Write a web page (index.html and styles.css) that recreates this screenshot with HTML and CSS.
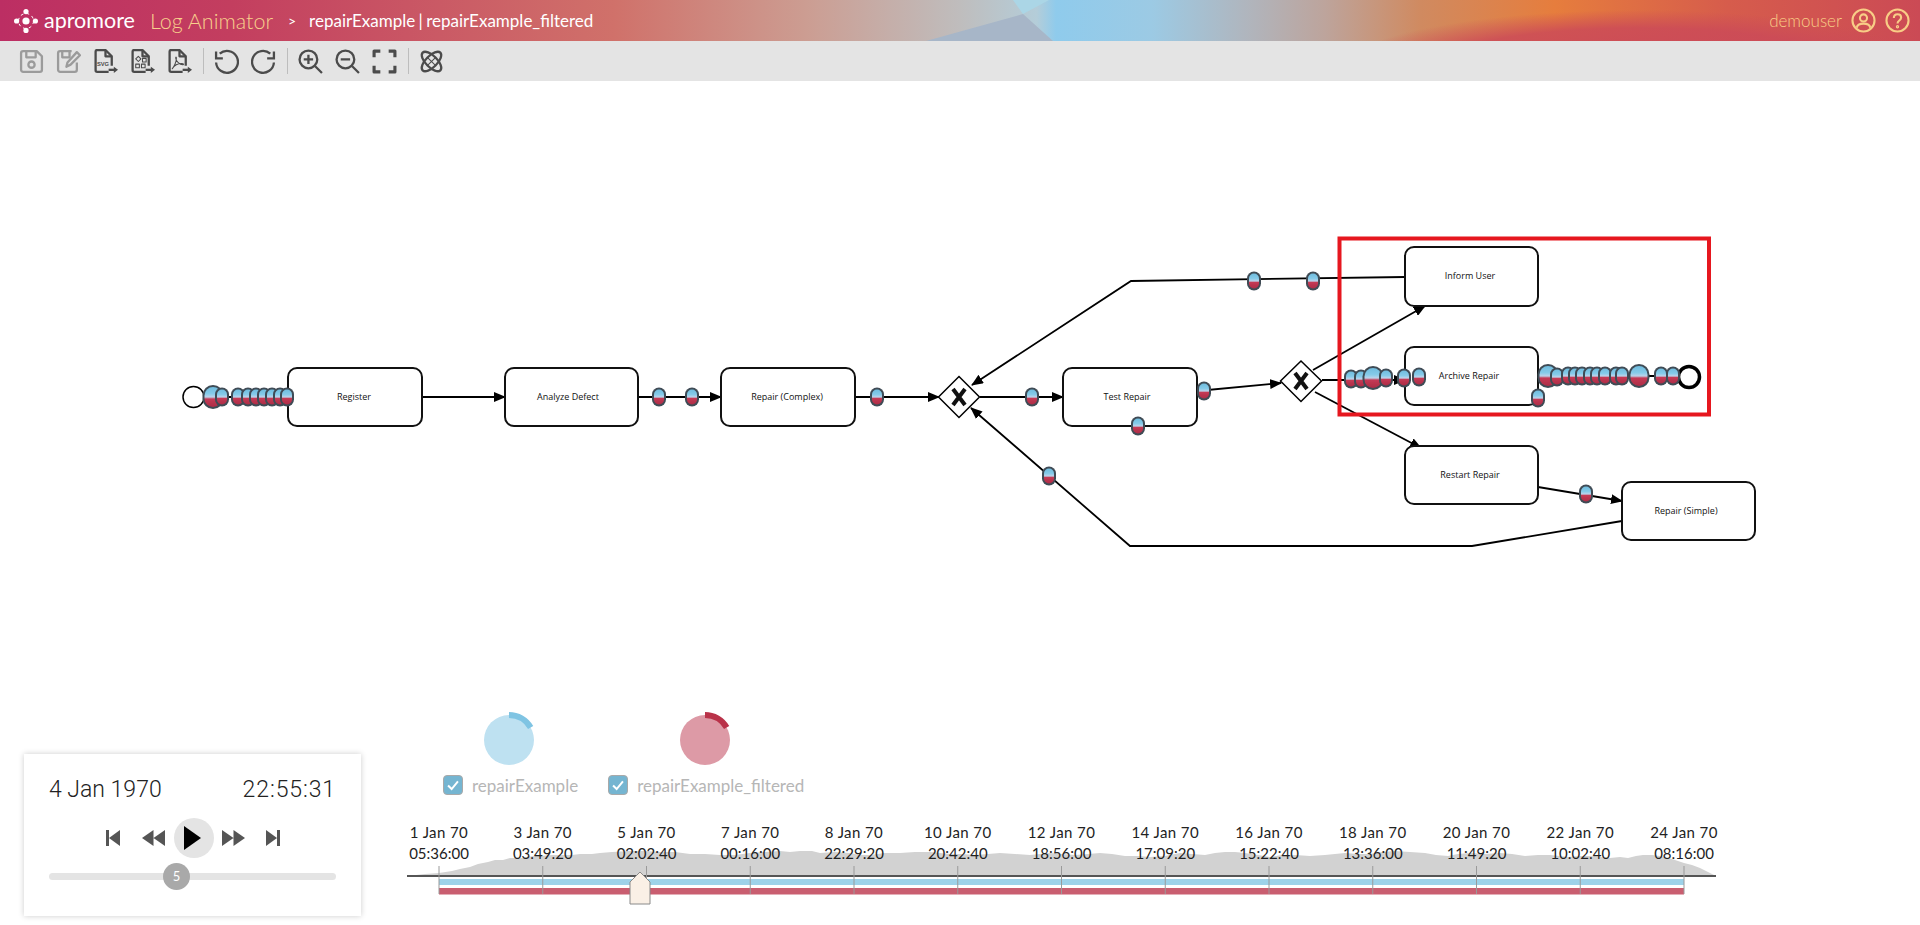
FILE: index.html
```html
<!DOCTYPE html>
<html lang="en">

<head>
  <meta charset="UTF-8">
  <title>Log Animator</title>
  <link rel="stylesheet" href="styles.css">
</head>

<body class="app-body">

  <!-- Header -->
  <header class="app-header">
    <svg class="header-art" viewBox="0 0 1920 41" preserveAspectRatio="none" aria-hidden="true">
      <defs>
        <linearGradient id="hdr-base">
          <stop offset="0" stop-color="#bc2e63" />
          <stop offset="0.12" stop-color="#c33e5f" />
          <stop offset="0.32" stop-color="#d0716a" />
          <stop offset="0.42" stop-color="#cc9d92" />
          <stop offset="0.5" stop-color="#bfbdbd" />
          <stop offset="0.54" stop-color="#b4cdd9" />
          <stop offset="0.55" stop-color="#8fcbec" />
          <stop offset="0.6" stop-color="#9ccae4" />
          <stop offset="0.65" stop-color="#b0b5bd" />
          <stop offset="0.69" stop-color="#bda49c" />
          <stop offset="0.74" stop-color="#d08a60" />
          <stop offset="0.81" stop-color="#e67d3d" />
          <stop offset="0.9" stop-color="#d65c4c" />
          <stop offset="1" stop-color="#cb4a55" />
        </linearGradient>
        <radialGradient id="hdr-red" gradientUnits="userSpaceOnUse" cx="1640" cy="70" r="300" gradientTransform="matrix(1 0 0 0.2 0 56)">
          <stop offset="0" stop-color="#cb4a58" />
          <stop offset="0.7" stop-color="#cb4a58" stop-opacity="0.85" />
          <stop offset="1" stop-color="#cb4a58" stop-opacity="0" />
        </radialGradient>
      </defs>
      <rect width="1920" height="41" fill="url(#hdr-base)" />
      <rect x="1300" width="620" height="41" fill="url(#hdr-red)" />
      <polygon points="1013,0 1049,0 1023,14" fill="#abd6e6" />
      <polygon points="926,41 1023,14 1053,41" fill="#a7b6c8" />
    </svg>
    <div class="brand">
      <svg class="brand-icon" viewBox="0 0 24 24">
        <circle cx="12" cy="12" r="7.5" fill="none" stroke="#fff" stroke-width="1" stroke-dasharray="3 2.9" />
        <circle cx="12" cy="12" r="3.6" fill="#fff" />
        <circle cx="12" cy="2.6" r="2.6" fill="#fff" />
        <circle cx="12" cy="21.4" r="2.6" fill="#fff" />
        <circle cx="2.6" cy="12" r="2.6" fill="#fff" />
        <circle cx="21.4" cy="12" r="2.6" fill="#fff" />
      </svg>
      <span class="brand-name">apromore</span>
      <span class="brand-tool">Log Animator</span>
      <span class="crumb-sep">&gt;</span>
      <span class="crumb">repairExample | repairExample_filtered</span>
    </div>
    <div class="user-box">
      <span class="user-name">demouser</span>
      <svg class="user-icon" viewBox="0 0 24 24">
        <circle cx="12" cy="12" r="10.6" />
        <circle cx="12" cy="9.5" r="3.4" />
        <path d="M5.5 19c.5-3 3-4 6.500-4s6 1 6.500 4" />
      </svg>
      <svg class="user-icon" viewBox="0 0 24 24">
        <circle cx="12" cy="12" r="10.6" />
        <path d="M8.500 9.500c0-2.200 1.500-3.500 3.500-3.500s3.500 1.300 3.500 3.200c0 2.800-3.500 2.800-3.500 5.600" />
        <circle cx="12" cy="18" r="0.6" />
      </svg>
    </div>
  </header>

  <!-- Toolbar -->
  <nav class="toolbar">
    <svg class="tool tool-off" viewBox="0 0 24 24">
      <path d="M4 2h13l5 5v13a2 2 0 0 1-2 2H4a2 2 0 0 1-2-2V4a2 2 0 0 1 2-2z" />
      <path d="M7 2v6h9V2" />
      <circle cx="12" cy="15" r="3" />
    </svg>
    <svg class="tool tool-off" viewBox="0 0 24 24">
      <path d="M20 13v7a2 2 0 0 1-2 2H4a2 2 0 0 1-2-2V4a2 2 0 0 1 2-2h11" />
      <path d="M6 2v6h7V2" />
      <path d="M10 17l1-4 9-10 3 3-9 9z" fill="#e4e4e4" />
    </svg>
    <svg class="tool" viewBox="0 0 24 24">
      <path d="M15 22H4a1.500 1.500 0 0 1-1.500-1.500v-18A1.500 1.500 0 0 1 4 1h8l6 6v9" />
      <path d="M12 1v6h6" />
      <text class="tool-text" x="3.800" y="16">SVG</text>
      <path d="M15 20h7" />
      <path class="tool-fill" d="M20 17l4 3-4 3z" />
    </svg>
    <svg class="tool" viewBox="0 0 24 24">
      <path d="M15 22H4a1.500 1.500 0 0 1-1.500-1.500v-18A1.500 1.500 0 0 1 4 1h8l6 6v9" />
      <path d="M12 1v6h6" />
      <path class="tool-thin" d="M8 7l2.500 2.500L8 12 5.500 9.500zM12 9h3.500v3.500H12zM5.500 14.500H9V18H5.500zM11 14.500h3.500V18H11z" />
      <path d="M15 20h7" />
      <path class="tool-fill" d="M20 17l4 3-4 3z" />
    </svg>
    <svg class="tool" viewBox="0 0 24 24">
      <path d="M15 22H4a1.500 1.500 0 0 1-1.500-1.500v-18A1.500 1.500 0 0 1 4 1h8l6 6v9" />
      <path d="M12 1v6h6" />
      <path class="tool-thin" d="M5 19c2-2 4-7 4-10 0-2-1-1.500-.5.500S12 15 15 15c1.500 0 1-1-1-1-3 0-7 2-9 5z" />
      <path d="M15 20h7" />
      <path class="tool-fill" d="M20 17l4 3-4 3z" />
    </svg>
    <span class="tool-sep"></span>
    <svg class="tool" viewBox="0 0 24 24">
      <path d="M5.500 4.500A10.500 10.500 0 1 1 2 13" />
      <path d="M2 2.500V9h6.500" stroke-linejoin="miter" />
    </svg>
    <svg class="tool" viewBox="0 0 24 24">
      <path d="M18.500 4.500A10.500 10.500 0 1 0 22 13" />
      <path d="M22 2.500V9h-6.500" stroke-linejoin="miter" />
    </svg>
    <span class="tool-sep"></span>
    <svg class="tool" viewBox="0 0 24 24">
      <circle cx="10" cy="10" r="8.500" />
      <path d="M16.500 16.500L23 23M10 5.500v9M5.500 10h9" />
    </svg>
    <svg class="tool" viewBox="0 0 24 24">
      <circle cx="10" cy="10" r="8.500" />
      <path d="M16.500 16.500L23 23M5.500 10h9" />
    </svg>
    <svg class="tool tool-fit" viewBox="0 0 24 24">
      <path d="M2 8V2h6M16 2h6v6M22 16v6h-6M8 22H2v-6" />
    </svg>
    <span class="tool-sep"></span>
    <svg class="tool" viewBox="0 0 24 24">
      <ellipse cx="12" cy="12" rx="5.500" ry="12" transform="rotate(45 12 12)" />
      <ellipse cx="12" cy="12" rx="5.500" ry="12" transform="rotate(-45 12 12)" />
      <path class="tool-thin" d="M8 8l8 8M16 8l-8 8" />
    </svg>
  </nav>

  <!-- Process map, in page coordinates -->
  <main class="map-area">
    <svg class="map" viewBox="0 81 1920 619">
      <defs>
        <marker id="arrow" markerUnits="userSpaceOnUse" markerWidth="12" markerHeight="10" refX="11" refY="5" orient="auto">
          <path d="M0 0L12 5L0 10z" fill="#000" />
        </marker>
        <linearGradient id="tok-fill" x2="0" y2="1">
          <stop offset="0" stop-color="#6fbcde" />
          <stop offset="0.34" stop-color="#86cbe9" />
          <stop offset="0.5" stop-color="#bcd3ea" />
          <stop offset="0.6" stop-color="#c43a55" />
          <stop offset="1" stop-color="#ad2c46" />
        </linearGradient>
        <filter id="tok-soft" x="-30%" y="-30%" width="160%" height="160%">
          <feGaussianBlur stdDeviation="0.7" />
        </filter>
        <g id="tok" filter="url(#tok-soft)">
          <rect x="-7" y="-9.500" width="14" height="19" rx="7" fill="#3f4b55" />
          <rect x="-5" y="-7.500" width="10" height="15" rx="5" fill="url(#tok-fill)" />
        </g>
        <g id="tok-big" filter="url(#tok-soft)">
          <rect x="-10.500" y="-12" width="21" height="24" rx="10.500" fill="#3f4b55" />
          <rect x="-8.500" y="-10" width="17" height="20" rx="8.500" fill="url(#tok-fill)" />
        </g>
      </defs>

      <!-- Edges -->
      <g class="edges">
        <path d="M204 397H288" />
        <path d="M422 397H505" marker-end="url(#arrow)" />
        <path d="M638 397H721" marker-end="url(#arrow)" />
        <path d="M855 397H939" marker-end="url(#arrow)" />
        <path d="M980 397H1063" marker-end="url(#arrow)" />
        <path d="M1197 391L1281 383" marker-end="url(#arrow)" />
        <path d="M1313 370L1425 306" marker-end="url(#arrow)" />
        <path d="M1322 380H1405" marker-end="url(#arrow)" />
        <path d="M1315 392L1421 448" marker-end="url(#arrow)" />
        <path d="M1538 376H1678" />
        <path d="M1538 487L1622 501" marker-end="url(#arrow)" />
        <path d="M1622 521L1472 546H1130L971 408" marker-end="url(#arrow)" />
        <path d="M1405 277L1131 281L972 385" marker-end="url(#arrow)" />
      </g>

      <!-- Nodes -->
      <circle class="node-start" cx="193.500" cy="397" r="10.500" />
      <g class="nodes">
        <rect x="288" y="368" width="134" height="58" rx="9" />
        <rect x="505" y="368" width="133" height="58" rx="9" />
        <rect x="721" y="368" width="134" height="58" rx="9" />
        <rect x="1063" y="368" width="134" height="58" rx="9" />
        <rect x="1405" y="247" width="133" height="59" rx="9" />
        <rect x="1405" y="347" width="133" height="58" rx="9" />
        <rect x="1405" y="446" width="133" height="58" rx="9" />
        <rect x="1622" y="482" width="133" height="58" rx="9" />
      </g>
      <g class="gateways">
        <path d="M959 376.500L979.500 397L959 417.500L938.500 397z" />
        <path d="M1301 361L1321.500 381L1301 401.500L1280.500 381z" />
      </g>
      <g class="gate-x">
        <path d="M953 389L965 405M965 389L953 405" />
        <path d="M1295 373L1307 389M1307 373L1295 389" />
      </g>
      <circle class="node-end" cx="1689" cy="377" r="10.500" />
      <g class="node-labels">
        <text x="354" y="400">Register</text>
        <text x="568" y="400">Analyze Defect</text>
        <text x="787" y="400">Repair (Complex)</text>
        <text x="1127" y="400">Test Repair</text>
        <text x="1470" y="279">Inform User</text>
        <text x="1469" y="379">Archive Repair</text>
        <text x="1470" y="478">Restart Repair</text>
        <text x="1686" y="514">Repair (Simple)</text>
      </g>

      <!-- Tokens -->
      <use href="#tok-big" x="213" y="397" />
      <use href="#tok" x="222" y="397" />
      <use href="#tok" x="238" y="397" />
      <use href="#tok" x="248" y="397" />
      <use href="#tok" x="256" y="397" />
      <use href="#tok" x="264" y="397" />
      <use href="#tok" x="272" y="397" />
      <use href="#tok" x="280" y="397" />
      <use href="#tok" x="287" y="397" />
      <use href="#tok" x="659" y="397" />
      <use href="#tok" x="692" y="397" />
      <use href="#tok" x="877" y="397" />
      <use href="#tok" x="1032" y="397" />
      <use href="#tok" x="1138" y="426" />
      <use href="#tok" x="1204" y="391" />
      <use href="#tok" x="1049" y="476" />
      <use href="#tok" x="1254" y="281" />
      <use href="#tok" x="1313" y="281" />
      <use href="#tok" x="1586" y="494" />
      <use href="#tok" x="1351" y="379" />
      <use href="#tok" x="1361" y="379" />
      <use href="#tok-big" x="1373" y="378" />
      <use href="#tok" x="1386" y="378" />
      <use href="#tok" x="1404" y="378" />
      <use href="#tok" x="1419" y="377" />
      <use href="#tok" x="1538" y="398" />
      <use href="#tok-big" x="1548" y="376" />
      <use href="#tok" x="1557" y="377" />
      <use href="#tok" x="1568" y="376" />
      <use href="#tok" x="1575" y="376" />
      <use href="#tok" x="1582" y="376" />
      <use href="#tok" x="1590" y="376" />
      <use href="#tok" x="1597" y="376" />
      <use href="#tok" x="1605" y="376" />
      <use href="#tok" x="1616" y="376" />
      <use href="#tok" x="1622" y="376" />
      <use href="#tok-big" x="1639" y="376" />
      <use href="#tok" x="1661" y="376" />
      <use href="#tok" x="1673" y="376" />

      <rect class="highlight" x="1339.500" y="238.500" width="369.500" height="176" />
    </svg>
  </main>

  <!-- Player and timeline -->
  <section class="bottom-row">
    <div class="player-card">
      <div class="player-clock">
        <span>4 Jan 1970</span>
        <span class="player-time">22:55:31</span>
      </div>
      <div class="player-controls">
        <svg class="ctl ctl-skip" viewBox="0 0 14 16">
          <path d="M0 0h3v16H0zM14 0v16L3 8z" />
        </svg>
        <svg class="ctl ctl-seek" viewBox="0 0 23 16">
          <path d="M11.500 0v16L0 8zM23 0v16L11.500 8z" />
        </svg>
        <span class="ctl-play">
          <svg class="ctl-play-icon" viewBox="0 0 17 24">
            <path d="M0 0l17 12L0 24z" />
          </svg>
        </span>
        <svg class="ctl ctl-seek" viewBox="0 0 23 16">
          <path d="M0 0l11.500 8L0 16zM11.500 0L23 8l-11.500 8z" />
        </svg>
        <svg class="ctl ctl-skip" viewBox="0 0 14 16">
          <path d="M0 0l11 8-11 8zM11 0h3v16h-3z" />
        </svg>
      </div>
      <div class="speed-track">
        <span class="speed-thumb">5</span>
      </div>
    </div>

    <div class="timeline-col">
      <div class="legend">
        <div class="legend-item">
          <svg class="legend-ring" viewBox="0 0 60 60">
            <circle cx="30" cy="30" r="25" fill="#bee1f1" />
            <path d="M30 5A25 25 0 0 1 51.650 17.500" fill="none" stroke="#7fc4e3" stroke-width="6" />
          </svg>
          <label class="legend-label">
            <span class="legend-check">
              <svg viewBox="0 0 20 20"><path d="M4.500 10.500L8.500 14.500L15.500 6" /></svg>
            </span>
            repairExample
          </label>
        </div>
        <div class="legend-item">
          <svg class="legend-ring" viewBox="0 0 60 60">
            <circle cx="30" cy="30" r="25" fill="#dd9aa6" />
            <path d="M30 5A25 25 0 0 1 51.650 17.500" fill="none" stroke="#b93249" stroke-width="6" />
          </svg>
          <label class="legend-label">
            <span class="legend-check">
              <svg viewBox="0 0 20 20"><path d="M4.500 10.500L8.500 14.500L15.500 6" /></svg>
            </span>
            repairExample_filtered
          </label>
        </div>
      </div>

      <svg class="timeline" viewBox="407 815 1330 95">
        <path class="tl-area" d="M407 876L425 874L439 873L452 871L460 869L470 867L478 864L488 862L495 860L503 860L510 858L522 858L533 856L540 856L552 855L560 855L572 855L580 854L592 854L600 853L612 852L630 851L645 851L660 852L675 852L690 854L705 854L720 855L735 855L750 853L765 852L780 851L790 852L800 851L812 851L820 853L835 852L850 853L860 855L870 855L885 853L900 853L915 852L930 852L940 853L950 854L962 854L975 855L988 854L1000 853L1015 854L1030 855L1040 854L1050 853L1062 854L1075 855L1088 854L1100 853L1112 854L1125 856L1138 856L1150 857L1165 856L1180 853L1192 854L1205 855L1215 853L1225 852L1235 852L1245 853L1258 855L1270 857L1282 855L1295 855L1310 856L1325 855L1335 854L1345 853L1358 854L1370 854L1382 852L1395 851L1410 852L1425 853L1436 855L1448 856L1458 854L1470 853L1485 854L1500 853L1512 854L1525 856L1538 855L1550 855L1560 856L1568 857L1580 856L1590 856L1600 857L1610 858L1620 857L1628 858L1636 856L1643 855L1652 855L1660 856L1672 859L1684 863L1692 865L1700 868L1708 872L1716 876z" />
        <rect class="tl-blue" x="439" y="879" width="1245" height="6" />
        <rect class="tl-red" x="439" y="888" width="1245" height="6.500" />
        <path class="tl-axis" d="M407 876H1716" />
        <path class="tl-ticks" d="M439 866V894M542.750 866V894M646.500 866V894M750.250 866V894M854 866V894M957.750 866V894M1061.500 866V894M1165.250 866V894M1269 866V894M1372.750 866V894M1476.500 866V894M1580.250 866V894M1684 866V894" />
        <polygon class="tl-marker" points="640,872 650,882 650,904 630,904 630,882" />
        <g class="tl-labels">
          <text class="tl-date" x="439" y="838">1 Jan 70</text><text x="439" y="859">05:36:00</text>
          <text class="tl-date" x="542.750" y="838">3 Jan 70</text><text x="542.750" y="859">03:49:20</text>
          <text class="tl-date" x="646.500" y="838">5 Jan 70</text><text x="646.500" y="859">02:02:40</text>
          <text class="tl-date" x="750.250" y="838">7 Jan 70</text><text x="750.250" y="859">00:16:00</text>
          <text class="tl-date" x="854" y="838">8 Jan 70</text><text x="854" y="859">22:29:20</text>
          <text class="tl-date" x="957.750" y="838">10 Jan 70</text><text x="957.750" y="859">20:42:40</text>
          <text class="tl-date" x="1061.500" y="838">12 Jan 70</text><text x="1061.500" y="859">18:56:00</text>
          <text class="tl-date" x="1165.250" y="838">14 Jan 70</text><text x="1165.250" y="859">17:09:20</text>
          <text class="tl-date" x="1269" y="838">16 Jan 70</text><text x="1269" y="859">15:22:40</text>
          <text class="tl-date" x="1372.750" y="838">18 Jan 70</text><text x="1372.750" y="859">13:36:00</text>
          <text class="tl-date" x="1476.500" y="838">20 Jan 70</text><text x="1476.500" y="859">11:49:20</text>
          <text class="tl-date" x="1580.250" y="838">22 Jan 70</text><text x="1580.250" y="859">10:02:40</text>
          <text class="tl-date" x="1684" y="838">24 Jan 70</text><text x="1684" y="859">08:16:00</text>
        </g>
      </svg>
    </div>
  </section>

</body>

</html>
```

FILE: styles.css
```css
/* Base */
.app-body {
  margin: 0;
  height: 925px;
  overflow: hidden;
  background: #fff;
  font-family: 'Lato', sans-serif;
  color: #333;
}

/* Header */
.app-header {
  position: relative;
  height: 41px;
  display: flex;
  align-items: center;
  justify-content: space-between;
  overflow: hidden;
}

.header-art {
  position: absolute;
  top: 0;
  left: 0;
  width: 100%;
  height: 100%;
}

.brand {
  position: relative;
  display: flex;
  align-items: center;
  padding-left: 14px;
  color: #fff;
}

.brand-icon {
  width: 24px;
  height: 24px;
}

.brand-name {
  margin-left: 6px;
  font-size: 21.500px;
  font-weight: 400;
  line-height: 1;
}

.brand-tool {
  margin-left: 15px;
  font-size: 21.500px;
  font-weight: 300;
  color: #f8d08c;
}

.crumb-sep {
  margin-left: 15px;
  font-size: 14px;
}

.crumb {
  margin-left: 13px;
  font-size: 17px;
  word-spacing: -1px;
}

.user-box {
  position: relative;
  display: flex;
  align-items: center;
  gap: 9px;
  padding-right: 10px;
  color: #f8cd86;
  font-size: 17px;
  font-weight: 300;
}

.user-icon {
  width: 25px;
  height: 25px;
  fill: none;
  stroke: #f8cd86;
  stroke-width: 2;
}

/* Toolbar */
.toolbar {
  height: 40px;
  box-sizing: border-box;
  padding-left: 19px;
  display: flex;
  align-items: center;
  background: #e4e4e4;
}

.tool {
  width: 25px;
  height: 25px;
  margin-right: 12px;
  flex: none;
  fill: none;
  stroke: #4b4b4b;
  stroke-width: 2.200;
  stroke-linejoin: round;
}

.tool-off {
  stroke: #9b9b9b;
}

.tool-fit {
  stroke-width: 3;
}

.tool-thin {
  stroke-width: 1;
}

.tool-fill {
  fill: #4b4b4b;
  stroke: none;
}

.tool-text {
  font-family: 'Liberation Sans', sans-serif;
  font-size: 5.500px;
  font-weight: 700;
  fill: #4b4b4b;
  stroke: none;
}

.tool-sep {
  width: 1px;
  height: 26px;
  margin: 0 10px 0 -1px;
  flex: none;
  background: #bdbdbd;
}

/* Process map */
.map-area {
  height: 619px;
}

.map {
  display: block;
  width: 1920px;
  height: 619px;
}

.edges path {
  fill: none;
  stroke: #000;
  stroke-width: 1.800;
}

.nodes rect {
  fill: #fff;
  stroke: #111;
  stroke-width: 2;
}

.node-start {
  fill: #fff;
  stroke: #000;
  stroke-width: 1.500;
}

.node-end {
  fill: #fff;
  stroke: #000;
  stroke-width: 3.500;
}

.gateways path {
  fill: #fff;
  stroke: #000;
  stroke-width: 1.500;
}

.gate-x path {
  fill: none;
  stroke: #111;
  stroke-width: 4;
}

.node-labels text {
  font-family: 'Open Sans', sans-serif;
  font-size: 9px;
  text-anchor: middle;
  fill: #111;
}

.highlight {
  fill: none;
  stroke: #e6171f;
  stroke-width: 4;
}

/* Player card */
.bottom-row {
  height: 225px;
  display: flex;
}

.player-card {
  width: 337px;
  height: 162px;
  box-sizing: border-box;
  margin: 54px 0 0 24px;
  padding: 24px 25px 0;
  background: #fff;
  box-shadow: 0 0 6px rgba(0, 0, 0, 0.2);
}

.player-clock {
  display: flex;
  justify-content: space-between;
  font-family: 'Roboto', sans-serif;
  font-size: 23px;
  font-weight: 300;
  line-height: 24px;
  color: #222;
}

.player-time {
  letter-spacing: 0.900px;
}

.player-controls {
  margin-top: 16px;
  display: flex;
  align-items: center;
  justify-content: center;
}

.ctl {
  height: 16px;
  fill: #555;
}

.ctl-skip {
  width: 14px;
}

.ctl-seek {
  width: 23px;
}

.ctl-skip:first-child {
  margin-right: 22px;
}

.ctl-skip:last-child {
  margin-left: 21px;
}

.ctl-play {
  width: 40px;
  height: 40px;
  margin: 0 8px 0 9px;
  display: flex;
  align-items: center;
  justify-content: center;
  border-radius: 50%;
  background: #e4e4e4;
}

.ctl-play-icon {
  width: 17px;
  height: 24px;
  margin-left: -3px;
}

.speed-track {
  position: relative;
  height: 7px;
  margin-top: 15px;
  border-radius: 4px;
  background: #e4e4e4;
}

.speed-thumb {
  position: absolute;
  top: -10px;
  left: 114px;
  width: 27px;
  height: 27px;
  border-radius: 50%;
  background: #a9a9a9;
  color: #fff;
  font-size: 13px;
  line-height: 27px;
  text-align: center;
}

/* Legend */
.timeline-col {
  margin-left: 46px;
}

.legend {
  display: flex;
  gap: 30px;
  padding: 10px 0 0 36px;
}

.legend-item {
  display: flex;
  flex-direction: column;
  align-items: center;
}

.legend-ring {
  width: 60px;
  height: 60px;
  margin-left: -3px;
}

.legend-label {
  margin-top: 5px;
  display: flex;
  align-items: center;
  gap: 9px;
  height: 20px;
  color: #b6b6b6;
  font-size: 17px;
}

.legend-check {
  width: 18px;
  height: 18px;
  display: block;
  border: 1px solid #a9a9a9;
  border-radius: 4px;
  background: #75b5d1;
}

.legend-check svg {
  display: block;
  fill: none;
  stroke: #fff;
  stroke-width: 2.200;
}

/* Timeline */
.timeline {
  display: block;
  width: 1330px;
  height: 95px;
  margin-top: 20px;
}

.tl-area {
  fill: #d2d2d2;
}

.tl-blue {
  fill: #9dd2e9;
}

.tl-red {
  fill: #c95e70;
}

.tl-axis {
  stroke: #555;
  stroke-width: 2;
}

.tl-ticks {
  stroke: #9a9a9a;
  stroke-width: 1;
}

.tl-marker {
  fill: #faf0e6;
  stroke: #8a8a8a;
  stroke-width: 1;
}

.tl-labels text {
  font-size: 15px;
  text-anchor: middle;
  fill: #222;
}

.tl-labels .tl-date {
  letter-spacing: 0.400px;
}
```
